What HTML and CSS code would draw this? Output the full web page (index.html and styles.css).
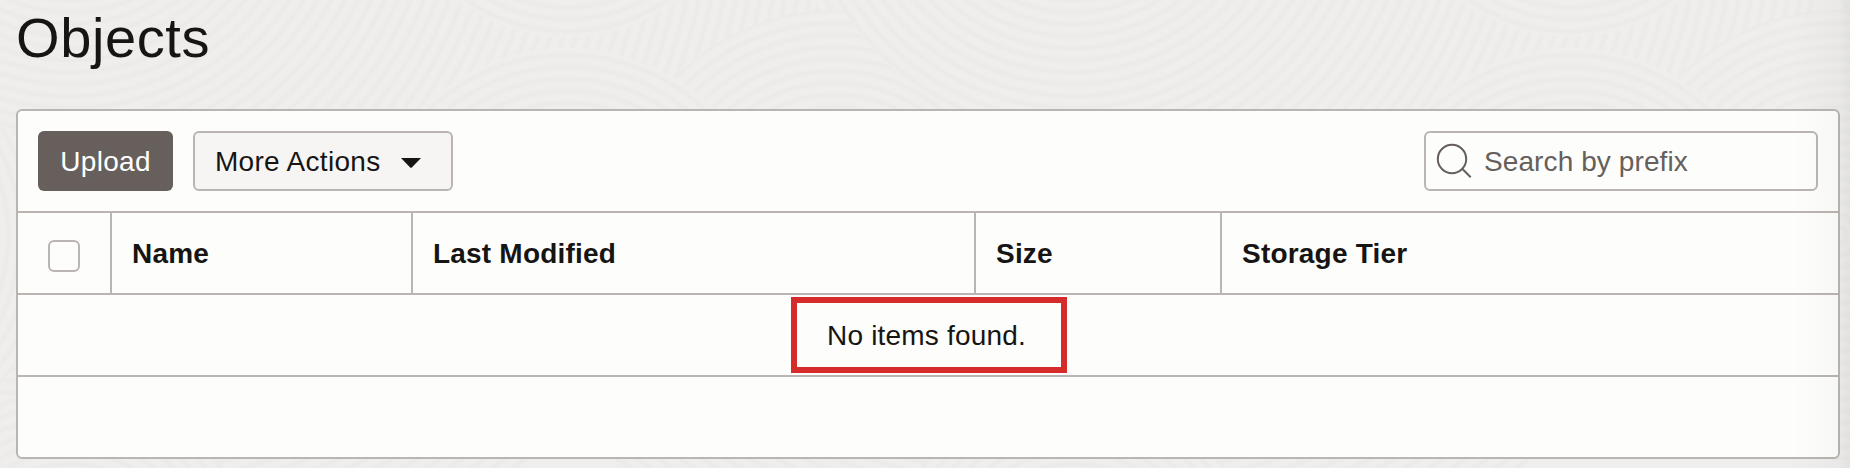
FILE: index.html
```html
<!DOCTYPE html>
<html lang="en">
<head>
<meta charset="utf-8">
<title>Objects</title>
<link rel="stylesheet" href="styles.css">
</head>
<body>
<svg class="texture" width="1850" height="468" viewBox="0 0 1850 468" aria-hidden="true">
  <defs>
    <radialGradient id="rings" gradientUnits="userSpaceOnUse" cx="0" cy="0" r="12" spreadMethod="repeat">
      <stop offset="0" stop-color="#efeeed"/>
      <stop offset=".35" stop-color="#efeeed"/>
      <stop offset=".7" stop-color="#ebeae9"/>
      <stop offset="1" stop-color="#efeeed"/>
    </radialGradient>
    <g id="sweep" fill="url(#rings)">
      <circle r="760" transform="translate(70 -140)"/>
    </g>
    <g id="tile" fill="url(#rings)">
      <circle r="225" transform="translate(835 235)"/>
      <circle r="275" transform="translate(1073 -140)"/>
      <circle r="182" transform="translate(567 -145)"/>
      <circle r="207" transform="translate(567 255)"/>
      <circle r="190" transform="translate(70 580)"/>
    </g>
  </defs>
  <use href="#sweep" x="1003"/>
  <use href="#sweep"/>
  <use href="#sweep" x="1003" class="sweep-right"/>
  <use href="#tile" x="-1003"/>
  <use href="#tile"/>
  <use href="#tile" x="1003"/>
</svg>
<main class="page">
  <h1 class="title">Objects</h1>
  <section class="panel">
    <div class="toolbar">
      <button class="btn btn-primary">Upload</button>
      <button class="btn btn-menu">More Actions
        <svg width="20" height="10" viewBox="0 0 20 10"><path d="M0 0H20L10.8 9.4Q10 10 9.2 9.4Z" fill="#161513"/></svg>
      </button>
      <label class="search">
        <svg width="36" height="36" viewBox="0 0 36 36" fill="none" stroke="#665f5b" stroke-width="2"><circle cx="16" cy="16" r="14.2"/><path d="M26 25.5L34.7 34.2"/></svg>
        <input class="search-input" type="text" placeholder="Search by prefix">
      </label>
    </div>
    <div class="row head">
      <div class="cell check"><span class="checkbox"></span></div>
      <div class="cell">Name</div>
      <div class="cell">Last Modified</div>
      <div class="cell">Size</div>
      <div class="cell">Storage Tier</div>
    </div>
    <div class="row empty"><span class="notice">No items found.</span></div>
    <div class="row"></div>
  </section>
</main>
</body>
</html>
```
FILE: styles.css
```css
* { box-sizing: border-box; }
body {
  margin: 0;
  height: 468px;
  overflow: hidden;
  position: relative;
  background: #efeeed;
  color: #161513;
  font: 28px/34px "Liberation Sans", Arial, sans-serif;
  letter-spacing: .2px;
}
body::after {
  content: "";
  position: absolute;
  inset: 0 0 0 auto;
  width: 60px;
  background: linear-gradient(to right, rgba(0,0,0,0), rgba(0,0,0,.01) 45%, rgba(0,0,0,.025) 82%, rgba(0,0,0,.05));
  pointer-events: none;
}
.texture { position: absolute; inset: 0; z-index: -1; }
.sweep-right { clip-path: polygon(-70px -900px, 900px -900px, 900px 900px, -70px 900px); }
.page { padding: 6px 10px 0 16px; }
.title {
  margin: 0 0 39px;
  font-size: 56px;
  line-height: 64px;
  font-weight: 400;
  letter-spacing: .6px;
}
.panel {
  height: 350px;
  border: 2px solid #bab5b1;
  border-radius: 6px;
  background: #fdfdfb;
  overflow: hidden;
}
.toolbar {
  display: flex;
  gap: 20px;
  height: 100px;
  padding: 20px;
}
.btn {
  height: 60px;
  border-radius: 6px;
  font: inherit;
  letter-spacing: .3px;
  color: inherit;
}
.btn-primary {
  width: 135px;
  padding: 2px 0 0;
  border: 0;
  background: #665f5b;
  color: #fff;
}
.btn-menu {
  display: flex;
  align-items: center;
  gap: 21px;
  width: 260px;
  padding: 2px 0 0 20px;
  border: 2px solid #bab5b1;
  background: #f6f5f4;
}
.btn-menu svg { margin-top: 2px; }
.search {
  display: flex;
  align-items: center;
  gap: 12px;
  width: 394px;
  height: 60px;
  margin-left: auto;
  padding-left: 10px;
  border: 2px solid #bab5b1;
  border-radius: 6px;
}
.search-input {
  width: 310px;
  padding: 2px 0 0;
  border: 0;
  outline: 0;
  background: transparent;
  font: inherit;
  letter-spacing: .1px;
}
.search-input::placeholder { color: #665f5b; opacity: 1; }
.row { height: 82px; border-top: 2px solid #bab5b1; }
.head {
  display: grid;
  grid-template-columns: 94px 301px 563px 246px 1fr;
  font-weight: 700;
}
.cell {
  display: flex;
  align-items: center;
  padding: 2px 0 0 20px;
  border-right: 2px solid #bab5b1;
}
.cell:last-child { border-right: 0; }
.check { padding: 6px 0 0 30px; }
.checkbox {
  width: 32px;
  height: 32px;
  border: 2px solid #bab5b1;
  border-radius: 6px;
}
.empty {
  display: flex;
  align-items: center;
  justify-content: center;
}
.notice {
  width: 276px;
  height: 76px;
  margin-left: 2px;
  padding-left: 30px;
  border: 6px solid #d52b2b;
  line-height: 65px;
  white-space: nowrap;
}
```
